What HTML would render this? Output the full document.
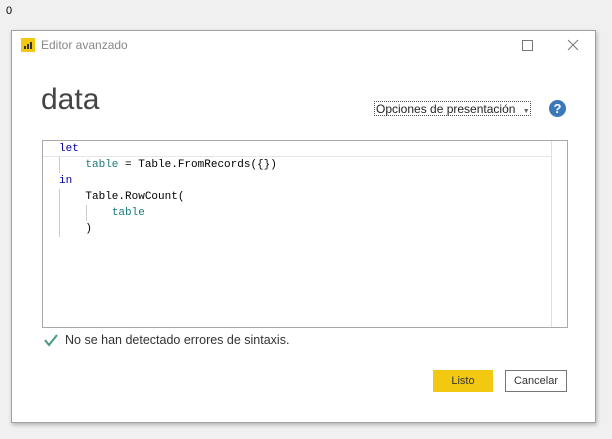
<!DOCTYPE html>
<html><head><style>
body{margin:0;width:612px;height:439px;background:#f0f0f0;position:relative;overflow:hidden;font-family:"Liberation Sans",sans-serif}
.a{position:absolute}
.dlg{left:11px;top:30px;width:585px;height:393px;background:#fff;border:1px solid #a0a0a0;box-sizing:border-box;box-shadow:1px 2px 4px rgba(0,0,0,.25)}
.code{font-family:"Liberation Mono",monospace;font-size:11px;line-height:16px;white-space:pre;color:#000}
.k{color:#00009f}.t{color:#1a7a7a}
</style></head><body>
<div class="a" style="left:6px;top:5px;font-size:11px;color:#000">0</div>
<div class="a dlg"></div>
<div class="a" style="left:21px;top:38px;width:14px;height:14px;background:#f2c811"></div>
<svg class="a" style="left:21px;top:38px" width="14" height="14"><rect x="3" y="8" width="2" height="3" fill="#333"/><rect x="6" y="6" width="2" height="5" fill="#333"/><rect x="9" y="4" width="2" height="7" fill="#333"/></svg>
<div class="a" style="left:41px;top:38px;font-size:12px;color:#888">Editor avanzado</div>
<div class="a" style="left:522px;top:40px;width:9px;height:9px;border:1px solid #777"></div>
<svg class="a" style="left:567px;top:39px" width="12" height="12"><path d="M1 1L11 11M11 1L1 11" stroke="#777" stroke-width="1"/></svg>
<div class="a" style="left:41px;top:83px;font-size:30px;color:#444;font-weight:300">data</div>
<div class="a" style="left:374px;top:101px;width:157px;height:15px;border:1px dotted #555;box-sizing:border-box;font-size:12px;line-height:14px;padding-left:1px;color:#222">Opciones de presentación <span style="font-size:7px;color:#666;margin-left:4px">▼</span></div>
<div class="a" style="left:549px;top:100px;width:17px;height:17px;border-radius:50%;background:#3b78b8;color:#fff;font-size:13px;font-weight:bold;text-align:center;line-height:17px">?</div>
<div class="a" style="left:42px;top:140px;width:526px;height:188px;border:1px solid #a9a9a9;box-sizing:border-box"></div>
<div class="a" style="left:43px;top:156px;width:508px;height:1px;background:#e6e6e6"></div>
<div class="a" style="left:551px;top:141px;width:1px;height:186px;background:#e0e0e0"></div>
<div class="a" style="left:59px;top:157px;width:1px;height:16px;background:#ccc"></div>
<div class="a" style="left:59px;top:189px;width:1px;height:48px;background:#ccc"></div>
<div class="a" style="left:86px;top:205px;width:1px;height:16px;background:#ccc"></div>
<div class="a code" style="left:59px;top:141px"><span class="k">let</span>
    <span class="t">table</span> = Table.FromRecords({})
<span class="k">in</span>
    Table.RowCount(
        <span class="t">table</span>
    )</div>
<svg class="a" style="left:43px;top:333px" width="16" height="14"><path d="M2 7L6 12L14 2" stroke="#4a9a80" stroke-width="2" fill="none"/></svg>
<div class="a" style="left:65px;top:333px;font-size:12.5px;color:#333">No se han detectado errores de sintaxis.</div>
<div class="a" style="left:433px;top:370px;width:60px;height:22px;background:#f2c811;font-size:11px;line-height:22px;text-align:center;color:#333">Listo</div>
<div class="a" style="left:505px;top:370px;width:62px;height:22px;border:1px solid #777;box-sizing:border-box;font-size:11px;line-height:20px;text-align:center;color:#333">Cancelar</div>
</body></html>
